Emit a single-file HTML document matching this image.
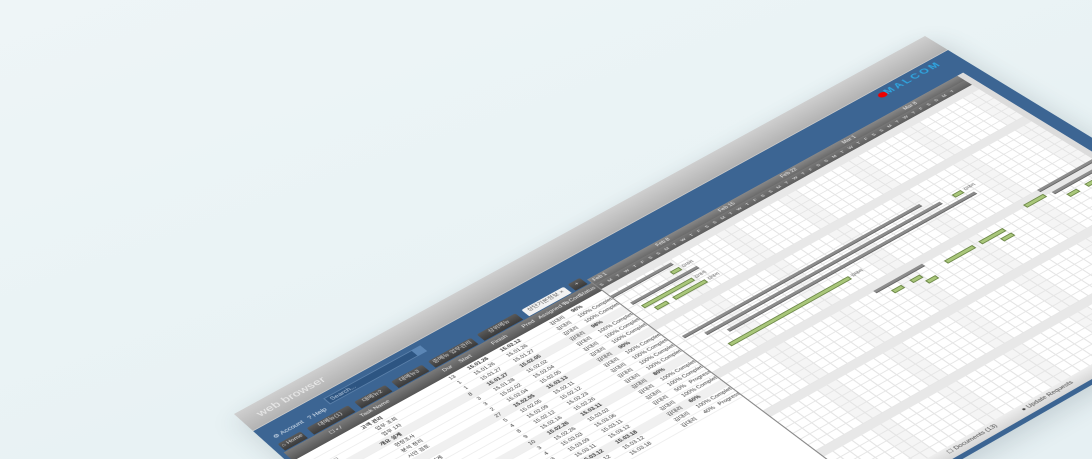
<!DOCTYPE html>
<html><head><meta charset="utf-8"><style>
html,body{margin:0;padding:0;width:1092px;height:459px;overflow:hidden;background:#e9f2f4;font-family:"Liberation Sans","Noto Sans CJK KR",sans-serif;}
#clip{position:relative;width:1092px;height:459px;overflow:hidden;background:linear-gradient(160deg,#eef5f7 0%,#e8f2f4 60%,#e6f0f3 100%);}
#w{position:absolute;left:0;top:0;width:700px;height:430px;transform-origin:0 0;
transform:matrix3d(1.04077,-0.53791,0,0.000057974,0.60309,0.49167,0,-0.00023583,0,0,1,0,234,414,0,1);
background:#3c6593;box-shadow:0 8px 24px rgba(40,60,70,.18);}
.a{position:absolute}
.chrome{left:0;top:0;width:700px;height:28px;background:linear-gradient(#cfcfcf,#b3b3b3);border-bottom:1px solid #c9c9c9}
.wb{left:14px;top:9px;font-size:11px;color:#ececec;letter-spacing:.2px}
.acc{left:8px;top:44px;font-size:6px;color:#dfe8f2}
.search{left:64px;top:35px;width:92px;height:10px;background:#2d5582;border:1px solid #5a80aa;font-size:6px;color:#b9cbe0;line-height:10px;padding-left:3px;box-sizing:border-box}
.sbtn{left:150px;top:35px;width:9px;height:10px;background:#5b86b5}
.logo{left:627px;top:33px;font-size:10px;font-weight:bold;color:#2fa6e0;letter-spacing:2px}
.dot{left:620px;top:35px;width:8px;height:7px;border-radius:50%;background:#e00}
.tab{top:56px;height:11px;background:linear-gradient(#5a5a5a,#3a3a3a);border-radius:2px 2px 0 0;color:#ddd;font-size:5.5px;line-height:11px;text-align:center}
.lp{left:4px;top:68px;width:301px;height:344px;background:#fff;overflow:hidden}
.hdr{left:0;top:0;width:301px;height:14px;background:linear-gradient(#7b7b7b,#555);color:#eee;font-size:5.5px}
.hdr span{position:absolute;top:4px}
.row{position:absolute;left:0;width:301px;height:9px;border-bottom:1px solid #eee;font-size:5px;color:#333;white-space:nowrap}
.row span{position:absolute;top:2px}
.g{left:305px;top:62px;width:377px;height:350px;background:#fff;overflow:hidden;border-left:1px solid #888}
.tl1{left:0;top:0;width:377px;height:9px;background:linear-gradient(#888,#6a6a6a);color:#f0f0f0;font-size:5px}
.tl2{left:0;top:9px;width:377px;height:9px;background:linear-gradient(#777,#5e5e5e);color:#e8e8e8;font-size:4.5px}
.tl1 span,.tl2 span{position:absolute;top:2px}
.grid{left:0;top:18px;width:377px;height:332px;
background:
repeating-linear-gradient(180deg,transparent 0 8px,#e6e6e6 8px 9px),
repeating-linear-gradient(90deg,transparent 0 8px,#e4e4e4 8px 9px),
repeating-linear-gradient(90deg,#fff 0 45px,#f5f5f5 45px 63px);}
.band{position:absolute;left:0;width:377px;height:9px;background:#e8e8e8}
.gb{position:absolute;height:3px;background:#8c8c8c;border-bottom:1px solid #666}
.gr{position:absolute;height:3px;background:#a9c77a;border:1px solid #6f8a4a}
.lb{position:absolute;font-size:4px;color:#444}
.sc{left:682px;top:62px;width:6px;height:350px;background:#dcdcdc}
.st{left:4px;top:412px;width:684px;height:13px;background:linear-gradient(#eee,#d6d6d6);font-size:5.5px;color:#444}
.st span{position:absolute;top:3px}
</style></head><body><div id="clip">
<div id="w">
<div class="a chrome"></div>
<div class="a wb">web browser</div>
<div class="a acc">⚙ Account &nbsp; ? Help</div>
<div class="a search">Search...</div>
<div class="a sbtn"></div>
<div class="a dot"></div>
<div class="a logo">MALCOM</div>

<div class="a tab" style="left:6px;width:22px">⌂ Home</div>
<div class="a tab" style="left:34px;width:40px">대메뉴(1)</div>
<div class="a tab" style="left:80px;width:30px">대메뉴2</div>
<div class="a tab" style="left:116px;width:30px">대메뉴3</div>
<div class="a tab" style="left:152px;width:42px">중메뉴 업무관리</div>
<div class="a tab" style="left:200px;width:38px">상위메뉴 Domain</div>
<div class="a tab" style="left:244px;width:42px;background:#f2f2f2;color:#555">상단기본정보 ×</div>
<div class="a tab" style="left:290px;width:12px">+</div>

<div class="a lp">
<div class="a hdr"><span style="left:40px">☐ ▪ /</span><span style="left:70px">Task Name</span><span style="left:150px">Dur</span><span style="left:166px">Start</span><span style="left:198px">Finish</span><span style="left:228px">Pred</span><span style="left:244px">Assigned To</span><span style="left:268px">% Com</span><span style="left:284px">Status</span></div>
<div class="row" style="top:14px"><span style="left:62px"><b>고객 관리</b></span><span style="left:148px">13</span><span style="left:166px"><b>15.01.26</b></span><span style="left:198px"><b>15.02.12</b></span><span style="left:246px">김대리</span><span style="left:268px"><b>96%</b></span></div>
<div class="row" style="top:23px"><span style="left:70px">업무 조회</span><span style="left:150px">1</span><span style="left:166px">15.01.26</span><span style="left:198px">15.01.26</span><span style="left:246px">김대리</span><span style="left:268px">100%</span><span style="left:282px">Complete</span></div>
<div class="row" style="top:32px"><span style="left:20px">▸ ☐</span><span style="left:70px">업무 1차</span><span style="left:150px">1</span><span style="left:166px">15.01.27</span><span style="left:198px">15.01.27</span><span style="left:246px">김대리</span><span style="left:268px">100%</span><span style="left:282px">Complete</span></div>
<div class="row" style="top:41px;background:#f0f0f0"><span style="left:62px"><b>개요 설계</b></span><span style="left:148px">8</span><span style="left:166px"><b>15.01.27</b></span><span style="left:198px"><b>15.02.05</b></span><span style="left:246px">김대리</span><span style="left:268px"><b>98%</b></span></div>
<div class="row" style="top:50px"><span style="left:20px">▸ ☐</span><span style="left:70px">현장조사</span><span style="left:150px">3</span><span style="left:166px">15.01.28</span><span style="left:198px">15.02.02</span><span style="left:246px">김대리</span><span style="left:268px">100%</span><span style="left:282px">Complete</span></div>
<div class="row" style="top:59px"><span style="left:70px">분석 정리</span><span style="left:150px">3</span><span style="left:166px">15.02.02</span><span style="left:198px">15.02.04</span><span style="left:246px">김대리</span><span style="left:268px">100%</span><span style="left:282px">Complete</span></div>
<div class="row" style="top:68px"><span style="left:70px">시안 검토</span><span style="left:150px">2</span><span style="left:166px">15.02.04</span><span style="left:198px">15.02.05</span><span style="left:246px">김대리</span><span style="left:268px">100%</span><span style="left:282px">Complete</span></div>
<div class="row" style="top:77px;background:#f0f0f0"><span style="left:62px"><b>개발</b></span><span style="left:148px">27</span><span style="left:166px"><b>15.02.05</b></span><span style="left:198px"><b>15.03.13</b></span><span style="left:246px">김대리</span><span style="left:268px"><b>90%</b></span></div>
<div class="row" style="top:86px"><span style="left:20px">▸ ☐</span><span style="left:70px">화면 설계</span><span style="left:150px">5</span><span style="left:166px">15.02.05</span><span style="left:198px">15.02.11</span><span style="left:246px">김대리</span><span style="left:268px">100%</span><span style="left:282px">Complete</span></div>
<div class="row" style="top:95px"><span style="left:70px">DB 설계</span><span style="left:150px">4</span><span style="left:166px">15.02.09</span><span style="left:198px">15.02.12</span><span style="left:246px">김대리</span><span style="left:268px">100%</span><span style="left:282px">Complete</span></div>
<div class="row" style="top:104px"><span style="left:70px">API 개발</span><span style="left:150px">8</span><span style="left:166px">15.02.12</span><span style="left:198px">15.02.23</span><span style="left:246px">김대리</span><span style="left:268px">100%</span><span style="left:282px">Complete</span></div>
<div class="row" style="top:113px"><span style="left:70px">화면 구현</span><span style="left:150px">9</span><span style="left:166px">15.02.16</span><span style="left:198px">15.02.26</span><span style="left:246px">김대리</span><span style="left:268px">100%</span><span style="left:282px">Complete</span></div>
<div class="row" style="top:122px;background:#f0f0f0"><span style="left:62px"><b>테스트</b></span><span style="left:148px">10</span><span style="left:166px"><b>15.02.26</b></span><span style="left:198px"><b>15.03.11</b></span><span style="left:246px">김대리</span><span style="left:268px"><b>80%</b></span></div>
<div class="row" style="top:131px"><span style="left:70px">단위 테스트</span><span style="left:150px">3</span><span style="left:166px">15.02.26</span><span style="left:198px">15.03.02</span><span style="left:246px">김대리</span><span style="left:268px">100%</span><span style="left:282px">Complete</span></div>
<div class="row" style="top:140px"><span style="left:70px">통합 테스트</span><span style="left:150px">4</span><span style="left:166px">15.03.03</span><span style="left:198px">15.03.06</span><span style="left:246px">김대리</span><span style="left:268px">100%</span><span style="left:282px">Complete</span></div>
<div class="row" style="top:149px"><span style="left:70px">결함 수정</span><span style="left:150px">3</span><span style="left:166px">15.03.09</span><span style="left:198px">15.03.11</span><span style="left:246px">김대리</span><span style="left:268px">50%</span><span style="left:282px">Progress</span></div>
<div class="row" style="top:158px"><span style="left:70px">문서화</span><span style="left:150px">2</span><span style="left:166px">15.03.11</span><span style="left:198px">15.03.12</span><span style="left:246px">김대리</span><span style="left:268px">100%</span><span style="left:282px">Complete</span></div>
<div class="row" style="top:167px;background:#f0f0f0"><span style="left:62px"><b>오픈</b></span><span style="left:148px">5</span><span style="left:166px"><b>15.03.12</b></span><span style="left:198px"><b>15.03.18</b></span><span style="left:246px">김대리</span><span style="left:268px"><b>60%</b></span></div>
<div class="row" style="top:176px"><span style="left:70px">배포</span><span style="left:150px">1</span><span style="left:166px">15.03.12</span><span style="left:198px">15.03.12</span><span style="left:246px">김대리</span><span style="left:268px">100%</span><span style="left:282px">Complete</span></div>
<div class="row" style="top:185px"><span style="left:70px">안정화</span><span style="left:150px">4</span><span style="left:166px">15.03.13</span><span style="left:198px">15.03.18</span><span style="left:246px">김대리</span><span style="left:268px">40%</span><span style="left:282px">Progress</span></div>
</div>

<div class="a g">
<div class="a tl1"><span style="left:2px">Feb 1</span><span style="left:65px">Feb 8</span><span style="left:128px">Feb 15</span><span style="left:191px">Feb 22</span><span style="left:254px">Mar 1</span><span style="left:317px">Mar 8</span></div>
<div class="a tl2"><span style="left:2px;letter-spacing:4.9px">SMTWTFSSMTWTFSSMTWTFSSMTWTFSSMTWTFSSMTWTFSSMT</span></div>
<div class="a grid">
<div class="band" style="top:0"></div>
<div class="band" style="top:63px"></div>
<div class="band" style="top:144px"></div>
<div class="band" style="top:207px"></div>
<div class="band" style="top:270px"></div>
<div class="gb" style="left:0;top:12px;width:60px"></div>
<div class="gr" style="left:52px;top:21px;width:7px"></div><div class="lb" style="left:63px;top:20px">김대리</div>
<div class="gb" style="left:6px;top:30px;width:66px"></div>
<div class="gr" style="left:10px;top:39px;width:48px"></div><div class="lb" style="left:62px;top:38px">김대리</div>
<div class="gr" style="left:16px;top:48px;width:10px"></div><div class="gr" style="left:34px;top:48px;width:30px"></div><div class="lb" style="left:68px;top:47px">김대리</div>
<div class="gb" style="left:10px;top:92px;width:235px"></div>
<div class="gb" style="left:25px;top:101px;width:233px"></div>
<div class="gb" style="left:40px;top:110px;width:245px"></div>
<div class="gr" style="left:270px;top:101px;width:7px"></div><div class="lb" style="left:281px;top:100px">김대리</div>
<div class="gr" style="left:30px;top:124px;width:116px"></div><div class="lb" style="left:150px;top:123px">김대리</div>
<div class="gb" style="left:150px;top:152px;width:48px"></div>
<div class="gr" style="left:160px;top:161px;width:8px"></div><div class="gr" style="left:178px;top:161px;width:8px"></div>
<div class="gr" style="left:186px;top:170px;width:8px"></div>
<div class="gr" style="left:212px;top:161px;width:26px"></div><div class="gr" style="left:246px;top:161px;width:22px"></div>
<div class="gr" style="left:260px;top:170px;width:9px"></div>
<div class="gr" style="left:300px;top:150px;width:18px"></div>
<div class="gb" style="left:320px;top:143px;width:57px"></div>
<div class="gb" style="left:326px;top:153px;width:44px"></div>
<div class="gr" style="left:332px;top:163px;width:8px"></div><div class="gr" style="left:350px;top:163px;width:8px"></div><div class="gr" style="left:368px;top:163px;width:8px"></div>
</div>
</div>
<div class="a sc"></div>
<div class="a st"><span style="left:370px">☐ Documents (13)</span><span style="left:440px">● Update Requests</span><span style="left:510px">☐ Web Forms</span></div>
</div>
</div></body></html>
